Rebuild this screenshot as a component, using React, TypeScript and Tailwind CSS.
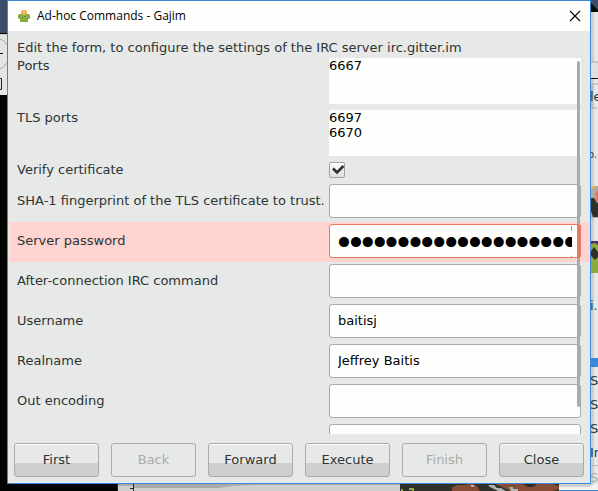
import type { ReactNode } from "react";

function GajimIcon() {
  return (
    <svg width="13" height="13" viewBox="0 0 13 13" aria-hidden="true">
      <path d="M3 1 4 0h4l1 1v4H3z" fill="#f0b95f" />
      <path d="M1 4h3l1 1h2l1-1h3l1 1v3l-1 1h-1v3H2V9H1L0 8V5z" fill="#8cab3f" />
      <path d="M6 6h1v1H6z" fill="#3b7fb0" />
    </svg>
  );
}

function Row({ id, label, invalid = false, top = false, children }: {
  id: string;
  label: string;
  invalid?: boolean;
  top?: boolean;
  children: ReactNode;
}) {
  return (
    <div
      className={`grid shrink-0 grid-cols-[312px_1fr] pt-0.5 pr-[9px] pb-1 pl-[7px] ${
        top ? "items-start" : "items-center leading-4"
      } ${invalid ? "bg-[#ffd3d0]" : ""}`}
    >
      <label htmlFor={id} className="whitespace-nowrap">{label}</label>
      {children}
    </div>
  );
}

function Field({ id, label, value = "" }: { id: string; label: string; value?: string }) {
  return (
    <Row id={id} label={label}>
      <input
        id={id}
        type="text"
        defaultValue={value}
        className="h-[34px] w-full min-w-0 rounded-[3px] border border-[#a9abaa] bg-[#fefffc] px-2 pb-0.5 text-black outline-none"
      />
    </Row>
  );
}

function Area({ id, label, value }: { id: string; label: string; value: string }) {
  return (
    <Row id={id} label={label} top>
      <textarea
        id={id}
        defaultValue={value}
        className="block h-[46px] w-full resize-none overflow-hidden bg-[#fefffc] text-black outline-none"
      />
    </Row>
  );
}

const actions = [
  { name: "First", enabled: true },
  { name: "Back", enabled: false },
  { name: "Forward", enabled: true },
  { name: "Execute", enabled: true },
  { name: "Finish", enabled: false },
  { name: "Close", enabled: true },
];

function Desktop() {
  return (
    <div className="absolute inset-0 overflow-hidden bg-[#d0d3d2] text-[13px] leading-4 text-[#2e3434]" aria-hidden="true">
      {/* left edge */}
      <div className="absolute top-0 left-0 h-[34px] w-2 border-b border-black bg-[#3b4d6b]" />
      <div className="absolute top-[35px] left-0 h-[60px] w-2 bg-[#e3e5e4]" />
      <svg className="absolute top-[35px] left-0" width="7" height="60" viewBox="0 0 7 60">
        <path d="M0 4q5 1 7 6M0 34q5-2 7-7" fill="none" stroke="#a9abaa" />
        <path d="M0 18.5h3" stroke="#111" />
        <path d="M0 43.5h1.5v11H0" fill="none" stroke="#222" />
      </svg>
      <div className="absolute top-[95px] bottom-0 left-0 w-[7px] bg-[#020300]" />

      {/* bottom edge */}
      <div className="absolute bottom-0 left-0 h-[7px] w-[117px] bg-[#020300]" />
      <svg className="absolute bottom-0 left-[117px]" width="481" height="7" viewBox="0 0 481 7">
        <path d="M0 0h481v7H0z" fill="#cdd0cf" />
        <path d="M0 0h283v1H135l-18 1-17 2H17V2H0z" fill="#a9abaa" />
        <path d="M0 0h1v7H0zM16 0h1v7h-1zM13 4h3v1h-3z" fill="#222" />
        <path d="M283 0h159v7H283z" fill="#2e302a" />
        <path d="M335 3l6-2h8l2-1h5l4 2 3 5h-28zM378 0h28l5 3h5l4-3h16l6 2v3l-6 2h-43l-8-4z" fill="#874c36" />
        <path d="M371 1h6l3 3h4l5 3h-8l-8-4zM392 3h4v2h5v2h-7zM354 1h3v2h-3z" fill="#b0b4b1" />
        <path d="M292 4h5v3h-2V6h-3zM284 5h2v2h-2z" fill="#8cab3f" />
        <path d="M442 0h39v6h-39z" fill="#f1f2f1" />
        <path d="M442 0h35l-5 3h-30z" fill="#cdd0cf" />
        <path d="M442 6h39v1h-39z" fill="#3b87d8" />
      </svg>

      {/* right edge */}
      <div className="absolute top-0 right-0 bottom-[7px] w-[7px] bg-gradient-to-r from-[#cdd0cf] from-50% to-[#e6e9e7] to-50%" />
      <svg className="absolute top-0 right-0" width="7" height="484" viewBox="0 0 7 484">
        <path d="M0 0h7v12H0z" fill="#3b4d6b" />
        <path d="M0 3 7 10v2H0z" fill="#080a08" />
        <path d="M0 62h7v16H0z" fill="#dfe1e0" />
        <path d="M0 78h7v1H0z" fill="#111" />
        <path d="M1 108V84h6M1 108h5M0 62h7" fill="none" stroke="#a9abaa" />
        <path d="M0 186h7v32H0z" fill="#a9abaa" />
        <path d="M0 186h5l-3 3H0z" fill="#edb54e" />
        <path d="M7 190l-3 4 2 2-2 3 3 3z" fill="#ed6c49" />
        <path d="M0 198h3l3 5h1v14H2l-2-6z" fill="#2e302a" />
        <path d="M0 241h7v32H0z" fill="#8cab3f" />
        <path d="M0 241h7v4l-3-2-4 1z" fill="#47316b" />
        <path d="M3 247l4 5v5l-3 3-4-4v-5z" fill="#2e302a" />
        <path d="M0 358h7v9H0z" fill="#3b87d8" />
        <path d="M0 465h7v1H0z" fill="#b5b8b7" />
      </svg>
      <span className="absolute top-[89px] left-[590px]">le</span>
      <span className="absolute top-[147px] left-[588px] text-[10px]">o.</span>
      <span className="absolute top-[298px] left-[590px]">i.</span>
      <span className="absolute top-[373px] left-[590px]">S</span>
      <span className="absolute top-[397px] left-[590px]">S</span>
      <span className="absolute top-[421px] left-[590px]">S</span>
      <span className="absolute top-[445px] left-[590px]">In</span>
      <span className="absolute top-[470px] left-[590px] text-[#a9abaa]">S</span>
    </div>
  );
}

export default function App() {
  return (
    <div className="relative flex h-screen flex-col overflow-hidden px-[7px] pb-[7px] font-['DejaVu_Sans',sans-serif] text-[13px] leading-[15px] text-[#2e3434]">
      <Desktop />
      <section
        aria-label="Ad-hoc Commands - Gajim"
        className="relative flex min-h-0 flex-1 flex-col border border-[#3b87d8] bg-[#e6e9e7]"
      >
        <header className="flex h-[30px] shrink-0 items-center bg-[#fefffc] pr-[7px] pl-2.5">
          <GajimIcon />
          <h1 className="ml-1.5 flex-1 font-['Open_Sans',sans-serif] text-[12px] leading-4 text-black">
            Ad-hoc Commands - Gajim
          </h1>
          <button type="button" aria-label="Close window" className="flex size-4 items-center justify-center">
            <svg width="12" height="12" viewBox="0 0 12 12" aria-hidden="true">
              <path d="M1 1l10 10M11 1 1 11" stroke="#000" strokeWidth="1.1" />
            </svg>
          </button>
        </header>

        <p className="mt-2 shrink-0 pl-[9px] leading-[17px] whitespace-nowrap">
          Edit the form, to configure the settings of the IRC server irc.gitter.im
        </p>

        <div className="relative ml-0.5 min-h-0 flex-1 overflow-hidden">
          <form className="flex flex-col">
            <Area id="ports" label="Ports" value="6667" />
            <Area id="tls-ports" label="TLS ports" value={"6697\n6670"} />
            <Row id="verify" label="Verify certificate">
              <span className="grid size-4">
                <input
                  id="verify"
                  type="checkbox"
                  defaultChecked
                  className="col-start-1 row-start-1 size-4 appearance-none rounded-[2px] border border-[#a0a2a1] bg-gradient-to-b from-white to-[#dcdfde]"
                />
                <svg className="pointer-events-none z-10 col-start-1 row-start-1" width="16" height="16" viewBox="0 0 16 16" aria-hidden="true">
                  <path d="M4 6.5 8 10.5 14.500 4" fill="none" stroke="#2e302a" strokeWidth="2.6" />
                </svg>
              </span>
            </Row>
            <Field id="sha" label="SHA-1 fingerprint of the TLS certificate to trust." />
            <Row id="password" label="Server password" invalid>
              <div className="relative flex h-[34px] min-w-0 rounded-[3px] border border-[#e57c62] bg-[#fefffc] px-2">
                <input
                  id="password"
                  type="password"
                  defaultValue="abcdefghijklmnopqrstuvwxyz"
                  className="h-8 w-full min-w-0 pt-1 font-['Liberation_Serif',serif] text-[34px] leading-8 text-black outline-none [-webkit-text-stroke:2px_black]"
                />
                <span className="absolute top-px right-2 h-[5px] w-px bg-[#e57c62]" />
                <span className="absolute right-2 bottom-0 h-px w-px bg-[#e57c62]" />
              </div>
            </Row>
            <Field id="command" label="After-connection IRC command" />
            <Field id="username" label="Username" value="baitisj" />
            <Field id="realname" label="Realname" value="Jeffrey Baitis" />
            <Field id="out-encoding" label="Out encoding" />
            <Field id="in-encoding" label="" />
          </form>
          {/* overlay scrollbar, tinted where it crosses the highlighted row */}
          <div className="absolute top-[5px] right-[10px] flex h-[346px] w-[3px] flex-col rounded-full bg-[#a9abaa]">
            <span className="mt-[163px] h-[34px] w-1 shrink-0 rounded-r-[3px] bg-[#e57c62]" />
          </div>
        </div>

        <footer className="mt-[9px] mb-1.5 flex shrink-0 gap-3 px-1.5">
          {actions.map((action) => (
            <button
              key={action.name}
              type="button"
              disabled={!action.enabled}
              className={`h-[34px] min-w-0 flex-1 rounded-[3px] border border-[#a9abaa] pb-0.5 ${
                action.enabled
                  ? "bg-gradient-to-b from-[#e6e9e7] from-60% to-[#cdd0cf] to-60% text-[#2e3434] shadow-[inset_0_1px_0_#ffffff]"
                  : "text-[#a9abaa]"
              }`}
            >
              {action.name}
            </button>
          ))}
        </footer>
      </section>
    </div>
  );
}
